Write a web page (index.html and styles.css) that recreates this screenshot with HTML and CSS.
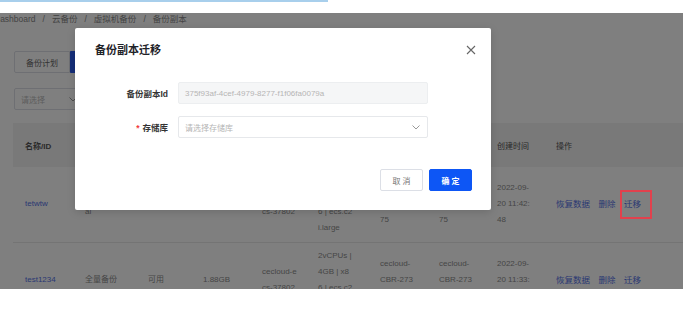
FILE: index.html
```html
<!DOCTYPE html>
<html lang="zh">
<head>
  <meta charset="UTF-8" />
  <title>备份副本</title>
  <link rel="stylesheet" href="styles.css">
</head>
<body>

<div class="topline"></div>

<!-- screenshot frame -->
<div class="shot">
  <div class="app">
    <div class="crumbs">Dashboard<span class="sep">/</span>云备份<span class="sep">/</span>虚拟机备份<span class="sep">/</span>备份副本</div>

    <div class="tabs">
      <button class="tab">备份计划</button>
      <button class="tab tab-on">备份副本</button>
    </div>

    <div class="filter">
      <span>请选择</span>
      <svg class="chev" width="8" height="5" viewBox="0 0 8 5"><path d="M0.5 0.5 L4 4 L7.5 0.5" fill="none" stroke="#999" stroke-width="1"/></svg>
    </div>

    <table class="grid">
      <thead>
        <tr>
          <th class="c1">名称/ID</th>
          <th class="c2">类型</th>
          <th class="c3">状态</th>
          <th class="c4">大小</th>
          <th class="c5">实例</th>
          <th class="c6">规格</th>
          <th class="c7">存储库</th>
          <th class="c8">存储库ID</th>
          <th class="c9">创建时间</th>
          <th class="c10">操作</th>
        </tr>
      </thead>
      <tbody>
        <tr>
          <td><a href="#">tetwtw</a></td>
          <td>Increment<br>al</td>
          <td>可用</td>
          <td>1.88GB</td>
          <td>cecloud-e<br>cs-37802</td>
          <td>2vCPUs |<br>4GB | x8<br>6 | ecs.c2<br>i.large</td>
          <td>cecloud-<br>CBR-273<br>75</td>
          <td>cecloud-<br>CBR-273<br>75</td>
          <td>2022-09-<br>20 11:42:<br>48</td>
          <td class="ops"><a href="#">恢复数据</a><a href="#">删除</a><a href="#">迁移</a></td>
        </tr>
        <tr>
          <td><a href="#">test1234</a></td>
          <td>全量备份</td>
          <td>可用</td>
          <td>1.88GB</td>
          <td>cecloud-e<br>cs-37802</td>
          <td>2vCPUs |<br>4GB | x8<br>6 | ecs.c2<br>i.large</td>
          <td>cecloud-<br>CBR-273<br>75</td>
          <td>cecloud-<br>CBR-273<br>75</td>
          <td>2022-09-<br>20 11:33:<br>12</td>
          <td class="ops"><a href="#">恢复数据</a><a href="#">删除</a><a href="#">迁移</a></td>
        </tr>
      </tbody>
    </table>
  </div>

  <div class="mask"></div>

  <!-- Migrate dialog -->
  <div class="dialog">
    <div class="dialog-head">
      <h2>备份副本迁移</h2>
      <svg class="close" width="10" height="10" viewBox="0 0 10 10"><path d="M1 1 L9 9 M9 1 L1 9" stroke="#666" stroke-width="1.1" fill="none"/></svg>
    </div>
    <div class="form">
      <div class="form-row">
        <label>备份副本Id</label>
        <div class="field field-off">375f93af-4cef-4979-8277-f1f06fa0079a</div>
      </div>
      <div class="form-row">
        <label><i>*</i>存储库</label>
        <div class="field field-select">
          <span>请选择存储库</span>
          <svg width="8" height="5" viewBox="0 0 8 5"><path d="M0.5 0.5 L4 4 L7.5 0.5" fill="none" stroke="#999" stroke-width="1"/></svg>
        </div>
      </div>
    </div>
    <div class="dialog-foot">
      <button class="btn">取 消</button>
      <button class="btn btn-primary">确 定</button>
    </div>
  </div>

  <div class="mark"></div>
</div>

</body>
</html>
```

FILE: styles.css
```css
* {
  box-sizing: border-box;
  margin: 0;
  padding: 0;
}

body {
  font-family: "Liberation Sans", "Noto Sans CJK SC", sans-serif;
  font-size: 8px;
  background: #fff;
  color: #333;
}

.topline {
  width: 328px;
  height: 2px;
  background: #a8cfec;
  margin-bottom: 11px;
}

.shot {
  position: relative;
  width: 683px;
  height: 276px;
  overflow: hidden;
  background: #fff;
}

/* page behind the dialog */
.crumbs {
  height: 13px;
  line-height: 13px;
  margin-left: -6px;
  font-size: 8.5px;
  color: #888;
  white-space: nowrap;
}

.crumbs .sep {
  margin: 0 7px;
}

.tabs {
  display: flex;
  margin: 25px 0 0 14px;
}

.tab {
  height: 22px;
  width: 56px;
  font-family: inherit;
  font-size: 8px;
  color: #666;
  background: #fff;
  border: 1px solid #dcdfe6;
  border-radius: 2px 0 0 2px;
}

.tab-on {
  background: #2a5cf2;
  border-color: #2a5cf2;
  color: #fff;
  border-radius: 0 2px 2px 0;
}

.filter {
  display: flex;
  align-items: center;
  justify-content: space-between;
  width: 70px;
  height: 22px;
  margin: 15px 0 0 14px;
  padding: 0 6px 0 6px;
  border: 1px solid #dcdfe6;
  border-radius: 2px;
  color: #bbb;
}

.grid {
  margin: 13px 0 0 13px;
  border-collapse: collapse;
  table-layout: fixed;
  width: 670px;
  color: #8c8c8c;
}

.grid th {
  height: 44px;
  background: #f2f2f2;
  text-align: left;
  font-weight: normal;
  color: #555;
  padding-left: 12px;
}

.grid th.c1 {
  font-weight: bold;
}

.grid td {
  height: 75px;
  padding-left: 12px;
  line-height: 16px;
  border-bottom: 1px solid #e8e8e8;
  vertical-align: middle;
}

.c1 { width: 60px; }
.c2 { width: 63px; }
.c3 { width: 55px; }
.c4 { width: 59px; }
.c5 { width: 56px; }
.c6 { width: 62px; }
.c7 { width: 59px; }
.c8 { width: 58px; }
.c9 { width: 59px; }

.grid a {
  color: #5572e6;
  text-decoration: none;
}

.ops {
  font-size: 8.5px;
}

.ops a {
  margin-right: 8.5px;
}

.mask {
  position: absolute;
  top: 0;
  left: 0;
  width: 100%;
  height: 100%;
  background: rgba(0, 0, 0, 0.5);
}

/* dialog */
.dialog {
  position: absolute;
  left: 75px;
  top: 15px;
  width: 416px;
  height: 182px;
  background: #fff;
  border-radius: 2px;
  box-shadow: 0 2px 8px rgba(0, 0, 0, 0.15);
}

.dialog-head {
  display: flex;
  justify-content: space-between;
  align-items: center;
  padding: 16px 15px 0 20px;
}

.dialog-head h2 {
  font-size: 11px;
  line-height: 12px;
  font-weight: bold;
  color: #1f2329;
}

.form {
  display: flex;
  flex-direction: column;
  gap: 12px;
  padding-top: 26px;
}

.form-row {
  display: flex;
  align-items: center;
  gap: 10px;
  margin-left: 33px;
}

.form-row label {
  width: 60px;
  text-align: right;
  font-weight: bold;
  font-size: 8.5px;
  color: #333;
}

.form-row label i {
  font-style: normal;
  color: #f23c3c;
  margin-right: 3px;
}

.field {
  width: 250px;
  height: 22px;
  display: flex;
  align-items: center;
  justify-content: space-between;
  padding: 0 6px;
  border: 1px solid #e6e8eb;
  border-radius: 2px;
  color: #b5b5b5;
}

.field-off {
  background: #f5f6f7;
  border-color: #eceef0;
}

.field-select svg {
  margin-right: 1px;
}

.dialog-foot {
  display: flex;
  justify-content: flex-end;
  gap: 6px;
  padding: 31px 19px 0 0;
}

.btn {
  width: 43px;
  height: 22px;
  font-family: inherit;
  font-size: 8px;
  color: #777;
  background: #fff;
  border: 1px solid #dcdfe6;
  border-radius: 2px;
}

.btn-primary {
  background: #0d56f5;
  border-color: #0d56f5;
  color: #fff;
  font-weight: bold;
}

/* red annotation box */
.mark {
  position: absolute;
  left: 620px;
  top: 177px;
  width: 32px;
  height: 29px;
  border: 2px solid #e2414d;
}
```
